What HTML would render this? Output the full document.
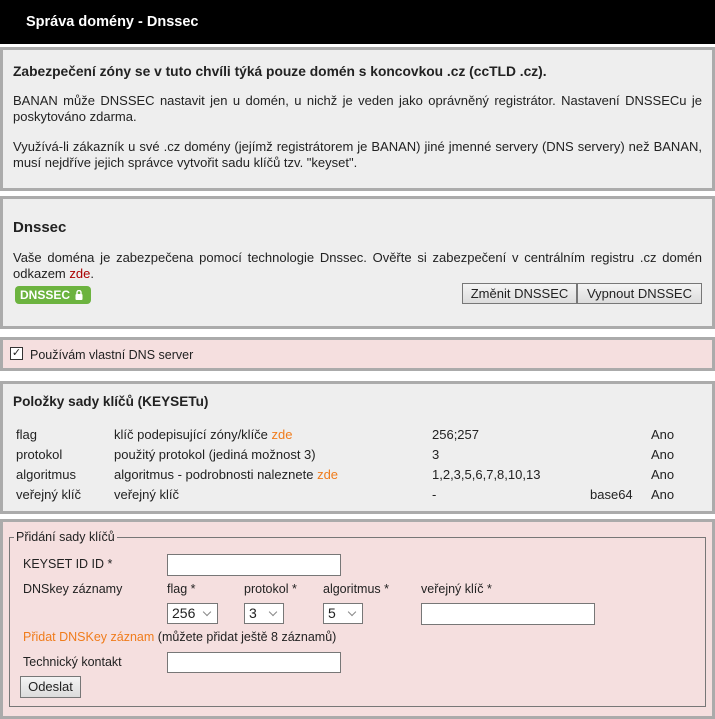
<!DOCTYPE html>
<html><head><meta charset="utf-8"><style>
*{margin:0;padding:0;box-sizing:border-box}
body{width:715px;height:714px;background:#fff;font-family:"Liberation Sans",Arial,sans-serif;font-size:13px;color:#222;position:relative;overflow:hidden}
.a{position:absolute;white-space:nowrap}
.box{position:absolute;left:0;width:715px;border:3px solid #ababab;background:#eee}
.pink{background:#f5dfdf}
.or{color:#f07c1c}
.j{position:absolute;left:13px;width:689px;text-align:justify;line-height:16px;white-space:normal}
.btn{position:absolute;height:21px;border:1px solid #777;background:linear-gradient(#f4f4f4,#dcdcdc);font-size:13px;line-height:19px;text-align:center}
.in{position:absolute;background:#fff;border:1px solid #777}
.sel{position:absolute;height:21px;background:#fff;border:1px solid #777;font-size:14px;line-height:19px;padding-left:4px}
.sel:after{content:"";position:absolute;right:7px;top:5px;width:5px;height:5px;border-right:1px solid #888;border-bottom:1px solid #888;transform:rotate(45deg)}
</style></head><body>
<div class="a" style="left:0;top:0;width:715px;height:44px;background:#000"></div>
<div class="a" style="left:26px;top:14px;color:#fff;font-weight:bold;font-size:14.5px">Správa domény - Dnssec</div>

<div class="box" style="top:47px;height:144px"></div>
<div class="a" style="left:13px;top:64px;font-weight:bold;font-size:13.8px">Zabezpečení zóny se v tuto chvíli týká pouze domén s koncovkou .cz (ccTLD .cz).</div>
<div class="j" style="top:93px">BANAN může DNSSEC nastavit jen u domén, u nichž je veden jako oprávněný registrátor. Nastavení DNSSECu je poskytováno zdarma.</div>
<div class="j" style="top:139px">Využívá-li zákazník u své .cz domény (jejímž registrátorem je BANAN) jiné jmenné servery (DNS servery) než BANAN, musí nejdříve jejich správce vytvořit sadu klíčů tzv. "keyset".</div>

<div class="box" style="top:196px;height:133px"></div>
<div class="a" style="left:13px;top:219px;font-weight:bold;font-size:15px">Dnssec</div>
<div class="j" style="top:250px">Vaše doména je zabezpečena pomocí technologie Dnssec. Ověřte si zabezpečení v centrálním registru .cz domén odkazem <span style="color:#a00">zde</span>.</div>
<div class="a" style="left:15px;top:286px;width:76px;height:18px;background:#6cb33f;border-radius:4px;color:#fff;font-weight:bold;font-size:12px;line-height:18px;padding-left:5px">DNSSEC <svg width="8" height="10" viewBox="0 0 8 10" style="vertical-align:-1px;margin-left:2px"><path d="M2 4V2.5a2 2 0 0 1 4 0V4" stroke="#fff" stroke-width="1.4" fill="none"/><rect x="0.5" y="4" width="7" height="6" rx="1" fill="#fff"/></svg></div>
<div class="btn" style="left:462px;top:283px;width:115px">Změnit DNSSEC</div>
<div class="btn" style="left:577px;top:283px;width:125px">Vypnout DNSSEC</div>

<div class="box pink" style="top:337px;height:34px"></div>
<div class="a" style="left:10px;top:347px;width:13px;height:13px;border:1px solid #333;background:#fff;font-size:11px;line-height:11px;text-align:center">✓</div>
<div class="a" style="left:30px;top:348px;font-size:12.5px">Používám vlastní DNS server</div>

<div class="box" style="top:381px;height:133px"></div>
<div class="a" style="left:13px;top:394px;font-weight:bold;font-size:13.6px">Položky sady klíčů (KEYSETu)</div>
<div class="a" style="left:16px;top:427px">flag</div><div class="a" style="left:114px;top:427px">klíč podepisující zóny/klíče <span class="or">zde</span></div><div class="a" style="left:432px;top:427px">256;257</div><div class="a" style="left:651px;top:427px">Ano</div>
<div class="a" style="left:16px;top:447px">protokol</div><div class="a" style="left:114px;top:447px">použitý protokol (jediná možnost 3)</div><div class="a" style="left:432px;top:447px">3</div><div class="a" style="left:651px;top:447px">Ano</div>
<div class="a" style="left:16px;top:467px">algoritmus</div><div class="a" style="left:114px;top:467px">algoritmus - podrobnosti naleznete <span class="or">zde</span></div><div class="a" style="left:432px;top:467px">1,2,3,5,6,7,8,10,13</div><div class="a" style="left:651px;top:467px">Ano</div>
<div class="a" style="left:16px;top:487px">veřejný klíč</div><div class="a" style="left:114px;top:487px">veřejný klíč</div><div class="a" style="left:432px;top:487px">-</div><div class="a" style="left:590px;top:487px">base64</div><div class="a" style="left:651px;top:487px">Ano</div>

<div class="box pink" style="top:519px;height:200px"></div>
<div class="a" style="left:9px;top:537px;width:697px;height:170px;border:1px solid #777"></div>
<div class="a" style="left:14px;top:530px;background:#f5dfdf;padding:0 2px;font-size:12.5px">Přidání sady klíčů</div>
<div class="a" style="left:23px;top:557px;font-size:12.5px">KEYSET ID ID *</div>
<div class="in" style="left:167px;top:554px;width:174px;height:22px"></div>
<div class="a" style="left:23px;top:582px;font-size:12.5px">DNSkey záznamy</div>
<div class="a" style="left:167px;top:582px;font-size:12.5px">flag *</div>
<div class="a" style="left:244px;top:582px;font-size:12.5px">protokol *</div>
<div class="a" style="left:323px;top:582px;font-size:12.5px">algoritmus *</div>
<div class="a" style="left:421px;top:582px;font-size:12.5px">veřejný klíč *</div>
<div class="sel" style="left:167px;top:603px;width:51px">256</div>
<div class="sel" style="left:244px;top:603px;width:40px">3</div>
<div class="sel" style="left:323px;top:603px;width:40px">5</div>
<div class="in" style="left:421px;top:603px;width:174px;height:22px"></div>
<div class="a" style="left:23px;top:630px;font-size:12.5px"><span class="or">Přidat DNSKey záznam</span> (můžete přidat ještě 8 záznamů)</div>
<div class="a" style="left:23px;top:655px;font-size:12.5px">Technický kontakt</div>
<div class="in" style="left:167px;top:652px;width:174px;height:21px"></div>
<div class="btn" style="left:20px;top:676px;width:61px;height:22px">Odeslat</div>
</body></html>
